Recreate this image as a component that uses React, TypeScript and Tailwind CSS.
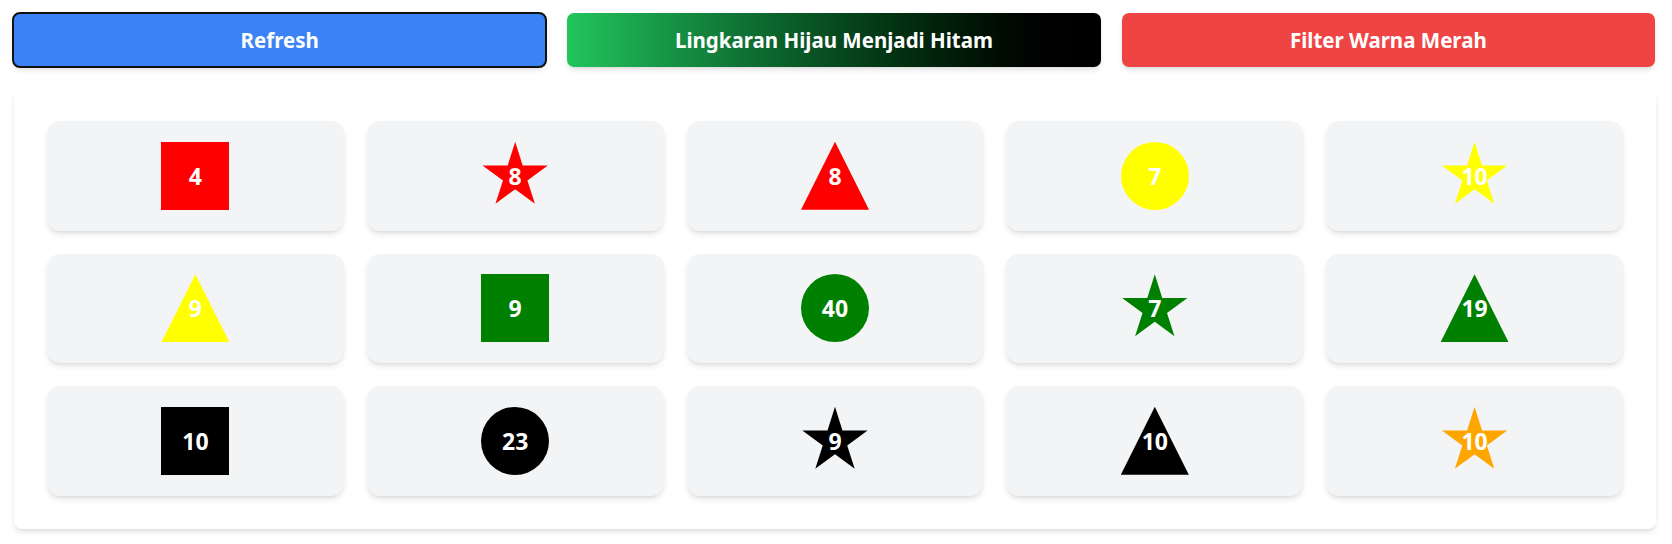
import React from 'react';

type Shape = 'square' | 'circle' | 'triangle' | 'star';

interface Item {
  shape: Shape;
  color: string;
  value: number;
}

const items: Item[] = [
  { shape: 'square', color: 'bg-[#ff0000]', value: 4 },
  { shape: 'star', color: 'bg-[#ff0000]', value: 8 },
  { shape: 'triangle', color: 'bg-[#ff0000]', value: 8 },
  { shape: 'circle', color: 'bg-[#ffff00]', value: 7 },
  { shape: 'star', color: 'bg-[#ffff00]', value: 10 },
  { shape: 'triangle', color: 'bg-[#ffff00]', value: 9 },
  { shape: 'square', color: 'bg-[#008000]', value: 9 },
  { shape: 'circle', color: 'bg-[#008000]', value: 40 },
  { shape: 'star', color: 'bg-[#008000]', value: 7 },
  { shape: 'triangle', color: 'bg-[#008000]', value: 19 },
  { shape: 'square', color: 'bg-black', value: 10 },
  { shape: 'circle', color: 'bg-black', value: 23 },
  { shape: 'star', color: 'bg-black', value: 9 },
  { shape: 'triangle', color: 'bg-black', value: 10 },
  { shape: 'star', color: 'bg-[#ffa500]', value: 10 },
];

const shapeClass: Record<Shape, string> = {
  square: '',
  circle: 'rounded-full',
  triangle: '[clip-path:polygon(50%_0%,0%_100%,100%_100%)]',
  star: '[clip-path:polygon(50%_0%,61%_35%,98%_35%,68%_57%,79%_91%,50%_70%,21%_91%,32%_57%,2%_35%,39%_35%)]',
};

const ShapeTile: React.FC<{ item: Item }> = ({ item }) => (
  <div className="h-[109.5px] bg-[#f3f4f6] rounded-[13px] shadow-md flex items-center justify-center">
    <div
      className={`w-[68px] h-[68px] flex items-center justify-center text-white font-bold text-[23px] ${item.color} ${shapeClass[item.shape]}`}
    >
      {item.value}
    </div>
  </div>
);

export default function App() {
  return (
    <div className="bg-white pl-[13px] pr-[17px] pt-[13px] pb-[10px] font-['Noto_Sans',sans-serif]">
      {/* Action buttons */}
      <div className="grid grid-cols-3 gap-x-[21px]">
        <button className="h-[54px] rounded-[7px] bg-[#3b82f6] text-white font-bold text-[20.5px] shadow-md outline-2 outline-[#111] outline-offset-[-1px]">
          Refresh
        </button>
        <button className="h-[54px] rounded-[7px] bg-gradient-to-r from-[#22c55e] to-black text-white font-bold text-[20.5px] shadow-md">
          Lingkaran Hijau Menjadi Hitam
        </button>
        <button className="h-[54px] rounded-[7px] bg-[#ef4444] text-white font-bold text-[20.5px] shadow-md">
          Filter Warna Merah
        </button>
      </div>

      {/* Shapes grid */}
      <div className="mt-[21px] ml-[1px] mr-[-1px] bg-white rounded-[8px] shadow-md p-[33px]">
        <div className="grid grid-cols-5 gap-x-[23px] gap-y-[23px]">
          {items.map((item, i) => (
            <ShapeTile key={i} item={item} />
          ))}
        </div>
      </div>
    </div>
  );
}
